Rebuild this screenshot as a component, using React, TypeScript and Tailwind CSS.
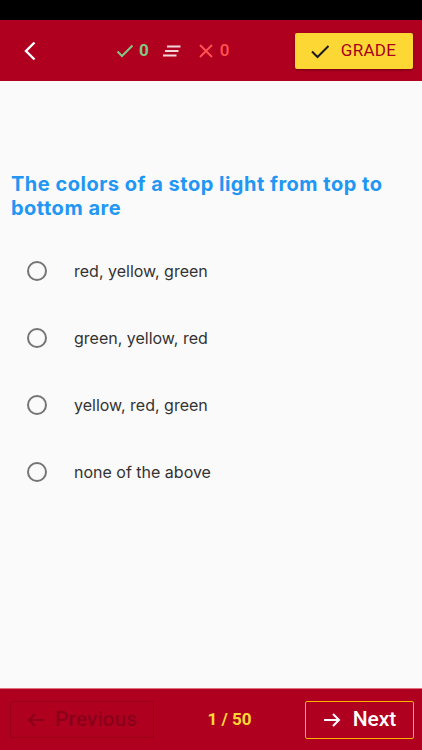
import { useState } from 'react';

const options = ['red, yellow, green', 'green, yellow, red', 'yellow, red, green', 'none of the above'];

function LinesIcon() {
  return (
    <svg width="19" height="12" viewBox="0 0 19 12" fill="none" stroke="#f3d6da" strokeWidth="2">
      <path d="M5 1.5h13.5" />
      <path d="M3 6h13.5" />
      <path d="M1 10.5h13.5" />
    </svg>
  );
}

export default function App() {
  const [selected, setSelected] = useState<number | null>(null);

  return (
    <div className="flex h-[750px] w-[422px] flex-col bg-[#fafafa] font-['Roboto',sans-serif]">
      <div className="h-5 bg-black" />
      <header className="flex h-[61px] items-center bg-[#b00020] pr-[9px] pl-[14px]">
        <button className="flex h-8 w-8 items-center justify-center text-white">
          <svg width="16" height="22" viewBox="0 0 16 22" fill="none" stroke="white" strokeWidth="2.4">
            <path d="M12.5 2.5 4 11l8.5 8.5" />
          </svg>
        </button>
        <div className="ml-[70px] flex items-center">
          <svg width="18" height="14" viewBox="0 0 18 14" fill="none" stroke="#81c784" strokeWidth="2">
            <path d="M1.5 7.5 6 12 16.5 1.5" />
          </svg>
          <span className="ml-[5px] text-[17px] font-bold text-[#81c784]">0</span>
          <span className="ml-[13px] flex items-center">
            <LinesIcon />
          </span>
          <svg className="ml-[17px]" width="16" height="16" viewBox="0 0 16 16" fill="none" stroke="#ff5252" strokeWidth="2">
            <path d="M2 2l12 12M14 2 2 14" />
          </svg>
          <span className="ml-[6px] text-[17px] font-medium text-[#ff5252]">0</span>
        </div>
        <button className="ml-auto flex h-9 w-[118px] items-center justify-center gap-[11px] rounded-[2px] bg-[#fdd835] pr-[2px] shadow-[0_1px_3px_rgba(0,0,0,0.35)]">
          <svg width="20" height="16" viewBox="0 0 20 16" fill="none" stroke="#1a1a1a" strokeWidth="2">
            <path d="M2 8.5 7.5 14 18.5 3" />
          </svg>
          <span className="text-[17px] tracking-[0.3px] text-[#a8001c]">GRADE</span>
        </button>
      </header>

      <main className="flex-1 px-[11px] pt-[91px]">
        <h1 className="text-[20px] leading-[24px] font-bold tracking-[0.5px] text-[#2196f3] font-['Inter',sans-serif]">
          The colors of a stop light from top to bottom are
        </h1>
        <ul className="mt-[17px] flex flex-col">
          {options.map((opt, i) => (
            <li
              key={opt}
              onClick={() => setSelected(i)}
              className="flex h-[67px] cursor-pointer items-center pl-[16px]"
            >
              <span className="flex h-5 w-5 items-center justify-center rounded-full border-2 border-[#757575]">
                {selected === i && <span className="h-[10px] w-[10px] rounded-full bg-[#2196f3]" />}
              </span>
              <span className="ml-[27px] text-[16px] text-[#333] font-['Inter',sans-serif]">{opt}</span>
            </li>
          ))}
        </ul>
      </main>

      <footer className="flex h-[62px] items-center border-t border-[#e2707f] bg-[#b00020] pr-[8px] pl-[10px]">
        <button className="flex h-[37px] w-[144px] items-center justify-center gap-[10px] rounded-[2px] border border-[#9a001c] text-[#8a0019]">
          <svg width="18" height="16" viewBox="0 0 18 16" fill="none" stroke="#8a0019" strokeWidth="2">
            <path d="M17 8H2M8 2 2 8l6 6" />
          </svg>
          <span className="text-[21px] font-medium">Previous</span>
        </button>
        <span className="flex-1 text-center text-[17px] font-bold text-[#fdd835]">1 / 50</span>
        <button className="flex h-[38px] w-[109px] items-center justify-center gap-[12px] rounded-[2px] border border-[#ffb300] text-white">
          <svg width="18" height="16" viewBox="0 0 18 16" fill="none" stroke="white" strokeWidth="2">
            <path d="M1 8h15M10 2l6 6-6 6" />
          </svg>
          <span className="text-[21px] font-medium">Next</span>
        </button>
      </footer>
    </div>
  );
}
